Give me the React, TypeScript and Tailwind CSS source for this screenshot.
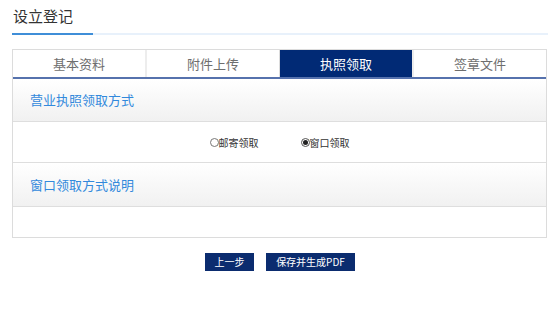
import React from "react";

const font = { fontFamily: '"Microsoft YaHei", "Noto Sans CJK SC", sans-serif' };

export default function App() {
  const tabs = ["基本资料", "附件上传", "执照领取", "签章文件"];
  return (
    <div className="w-[554px] h-[322px] bg-white" style={font}>
      <div className="pl-[13px] pt-[6px] text-[15px] leading-[20px] text-[#333]">设立登记</div>
      <div className="mx-[12px] mt-[7px] w-[536px] h-[2px] bg-[#e8f1fb] flex">
        <div className="w-[81px] h-[2px] bg-[#3f8ed8]"></div>
      </div>
      <div className="mx-[12px] mt-[14px] w-[535px] border border-[#dcdcdc]">
        <div className="flex h-[29px] border-b-2 border-[#5672ad]">
          {tabs.map((t, i) => (
            <div
              key={t}
              className={
                "flex-1 flex items-center justify-center text-[13px] " +
                (i === 2
                  ? "bg-[#012a75] text-white"
                  : "text-[#6e6e6e] bg-white") +
                (i < 3 && i !== 1 ? " border-r-2 border-[#ededed]" : "") +
                (i === 1 ? " border-r border-[#dcdcdc]" : "")
              }
            >
              {t}
            </div>
          ))}
        </div>
        <div className="h-[43px] flex items-center pl-[17px] text-[13px] text-[#3289dc] bg-gradient-to-b from-white to-[#f1f1f1] border-b border-[#dedede]">
          营业执照领取方式
        </div>
        <div className="h-[41px] flex items-center justify-center gap-[42px] text-[10px] text-[#333] border-b border-[#dedede]">
          <label className="flex items-center">
            <span className="w-[9px] h-[9px] rounded-full border border-[#777] bg-white inline-block"></span>
            <span>邮寄领取</span>
          </label>
          <label className="flex items-center">
            <span className="w-[9px] h-[9px] rounded-full border border-[#555] bg-white inline-flex items-center justify-center">
              <span className="w-[5px] h-[5px] rounded-full bg-[#222]"></span>
            </span>
            <span>窗口领取</span>
          </label>
        </div>
        <div className="h-[44px] flex items-center pl-[17px] text-[13px] text-[#3289dc] bg-gradient-to-b from-white to-[#f1f1f1] border-b border-[#dedede]">
          窗口领取方式说明
        </div>
        <div className="h-[30px]"></div>
      </div>
      <div className="flex justify-center gap-[12px] mt-[15px] pl-[6px]">
        <button className="w-[49px] h-[18px] bg-[#0b2c6f] text-white text-[10px] leading-[18px]">上一步</button>
        <button className="w-[89px] h-[18px] bg-[#0b2c6f] text-white text-[10px] leading-[18px]">保存并生成PDF</button>
      </div>
    </div>
  );
}
